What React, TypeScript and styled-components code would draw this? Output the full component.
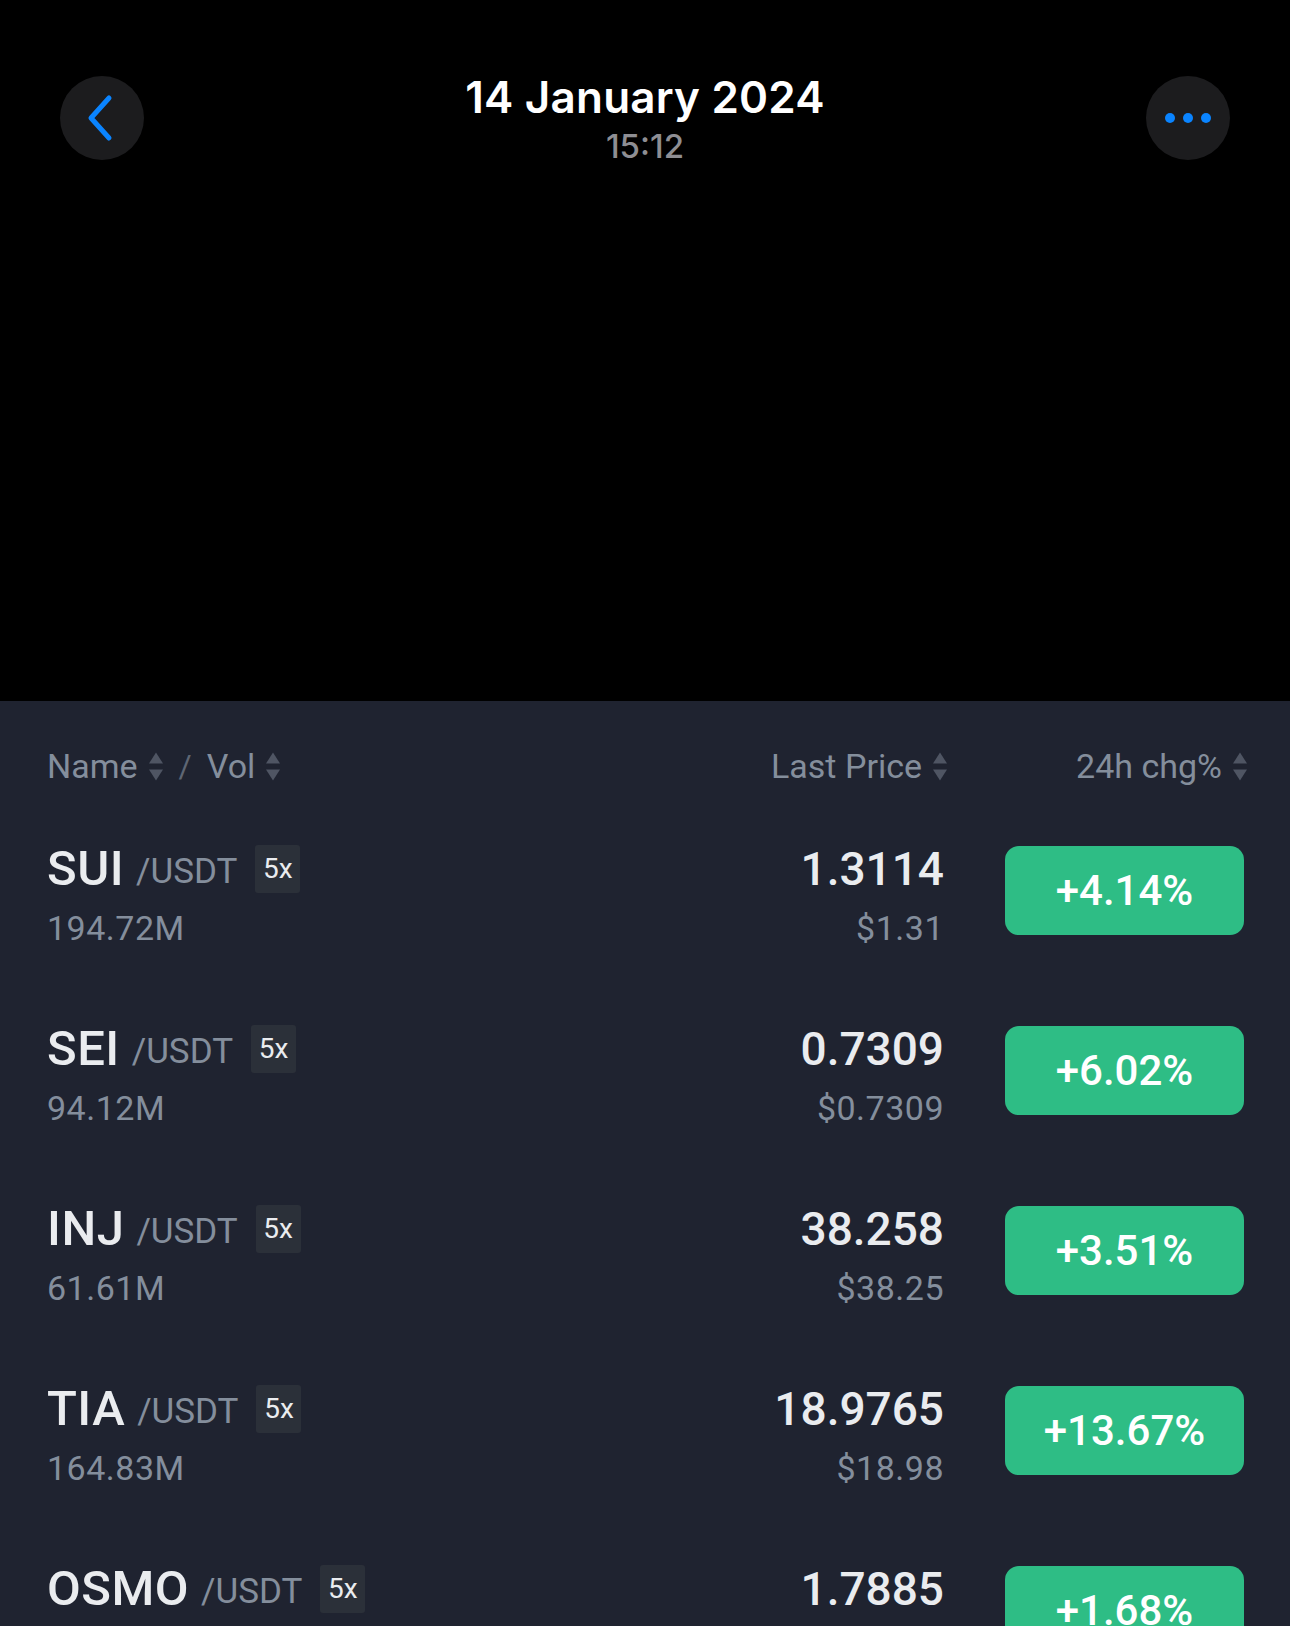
import React from 'react';
import styled, { createGlobalStyle } from 'styled-components';

const GlobalStyle = createGlobalStyle`
  html, body {
    margin: 0;
    padding: 0;
    background: #1f2330;
  }
  * {
    box-sizing: border-box;
  }
`;

interface Pair {
  base: string;
  vol: string;
  price: string;
  fiat: string;
  change: string;
}

const PAIRS: Pair[] = [
  { base: 'SUI', vol: '194.72M', price: '1.3114', fiat: '$1.31', change: '+4.14%' },
  { base: 'SEI', vol: '94.12M', price: '0.7309', fiat: '$0.7309', change: '+6.02%' },
  { base: 'INJ', vol: '61.61M', price: '38.258', fiat: '$38.25', change: '+3.51%' },
  { base: 'TIA', vol: '164.83M', price: '18.9765', fiat: '$18.98', change: '+13.67%' },
  { base: 'OSMO', vol: '', price: '1.7885', fiat: '', change: '+1.68%' },
];

const SortIcon: React.FC = () => (
  <SortSvg viewBox="0 0 16 31" width={16} height={31}>
    <path d="M8 1.5 L15 12.5 H1 Z" />
    <path d="M1 18.5 H15 L8 29.5 Z" />
  </SortSvg>
);

const App: React.FC = () => (
  <>
    <GlobalStyle />
    <Page>
      <Hero>
        <TopBar>
          <RoundButton aria-label="Back">
            <svg viewBox="0 0 28 48" width={28} height={48}>
              <path
                d="M23 4 L5 24 L23 44"
                fill="none"
                stroke="#0a84ff"
                strokeWidth={5}
                strokeLinecap="round"
                strokeLinejoin="round"
              />
            </svg>
          </RoundButton>
          <TitleBlock>
            <Title>14 January 2024</Title>
            <Time>15:12</Time>
          </TitleBlock>
          <RoundButton aria-label="More">
            <svg viewBox="0 0 48 12" width={48} height={12}>
              <circle cx="6" cy="6" r="5" fill="#0a84ff" />
              <circle cx="24" cy="6" r="5" fill="#0a84ff" />
              <circle cx="42" cy="6" r="5" fill="#0a84ff" />
            </svg>
          </RoundButton>
        </TopBar>
      </Hero>

      <Market>
        <HeaderRow>
          <HeaderLeft>
            <HeaderLabel>
              Name <SortIcon />
            </HeaderLabel>
            <Slash>/</Slash>
            <HeaderLabel>
              Vol <SortIcon />
            </HeaderLabel>
          </HeaderLeft>
          <HeaderLabel>
            Last Price <SortIcon />
          </HeaderLabel>
          <HeaderChange>
            <HeaderLabel>
              24h chg% <SortIcon />
            </HeaderLabel>
          </HeaderChange>
        </HeaderRow>

        {PAIRS.map((p) => (
          <Row key={p.base}>
            <NameCol>
              <NameLine>
                <Base>{p.base}</Base>
                <Quote>/USDT</Quote>
                <Leverage>5x</Leverage>
              </NameLine>
              <SubText>{p.vol}</SubText>
            </NameCol>
            <PriceCol>
              <Price>{p.price}</Price>
              <SubText>{p.fiat}</SubText>
            </PriceCol>
            <ChangeBadge>{p.change}</ChangeBadge>
          </Row>
        ))}
      </Market>
    </Page>
  </>
);

export default App;

const Page = styled.div`
  width: 1290px;
  min-height: 1626px;
  background: #1f2330;
  font-family: Roboto, 'Noto Sans', sans-serif;
  overflow: hidden;
`;

const Hero = styled.div`
  height: 701px;
  background: #000;
`;

const TopBar = styled.div`
  display: grid;
  grid-template-columns: 84px 1fr 84px;
  align-items: start;
  padding: 71px 60px 0;
`;

const RoundButton = styled.button`
  width: 84px;
  height: 84px;
  margin-top: 5px;
  border-radius: 50%;
  border: 0;
  padding: 0;
  background: #1c1c1e;
  display: flex;
  align-items: center;
  justify-content: center;
  &:first-child svg {
    margin-left: -4px;
  }
`;

const TitleBlock = styled.div`
  display: flex;
  flex-direction: column;
  align-items: center;
  font-family: Inter, 'Noto Sans', sans-serif;
`;

const Title = styled.div`
  font-size: 44px;
  line-height: 52px;
  font-weight: 600;
  color: #ffffff;
  letter-spacing: 0.2px;
`;

const Time = styled.div`
  font-size: 33px;
  line-height: 46px;
  font-weight: 500;
  color: #8e8e93;
`;

const Market = styled.div`
  display: flex;
  flex-direction: column;
`;

const HeaderRow = styled.div`
  display: flex;
  align-items: center;
  height: 104px;
  padding: 40px 42px 14px 47px;
`;

const HeaderLeft = styled.div`
  flex: 1;
  display: flex;
  align-items: center;
  gap: 15px;
`;

const HeaderLabel = styled.div`
  display: flex;
  align-items: center;
  gap: 10px;
  font-size: 34px;
  line-height: 50px;
  color: #848e9c;
`;

const Slash = styled.span`
  font-size: 32px;
  color: #5e6673;
`;

const HeaderChange = styled.div`
  width: 300px;
  display: flex;
  justify-content: flex-end;
`;

const SortSvg = styled.svg`
  fill: #4f5563;
  flex-shrink: 0;
`;

const Row = styled.div`
  display: flex;
  align-items: center;
  height: 180px;
  padding: 0 46px 0 47px;
`;

const NameCol = styled.div`
  flex: 1;
  display: flex;
  flex-direction: column;
  gap: 9px;
`;

const NameLine = styled.div`
  display: flex;
  align-items: center;
  height: 56px;
`;

const Base = styled.span`
  font-size: 49px;
  font-weight: 500;
  color: #eaecef;
  letter-spacing: 0.5px;
  margin-right: 12px;
`;

const Quote = styled.span`
  font-size: 35px;
  color: #848e9c;
  margin-top: 6px;
  margin-right: 18px;
`;

const Leverage = styled.span`
  display: flex;
  align-items: center;
  justify-content: center;
  width: 45px;
  height: 48px;
  background: #2b3039;
  border-radius: 3px;
  font-size: 28px;
  color: #eaecef;
`;

const SubText = styled.div`
  height: 44px;
  font-size: 34px;
  line-height: 44px;
  color: #848e9c;
  letter-spacing: 0.5px;
`;

const PriceCol = styled.div`
  display: flex;
  flex-direction: column;
  align-items: flex-end;
  gap: 9px;
  margin-right: 61px;
`;

const Price = styled.div`
  height: 56px;
  font-size: 46px;
  line-height: 56px;
  font-weight: 500;
  color: #eaecef;
`;

const ChangeBadge = styled.div`
  width: 239px;
  height: 89px;
  margin-bottom: 10px;
  border-radius: 14px;
  background: #2ebd85;
  display: flex;
  align-items: center;
  justify-content: center;
  font-size: 42px;
  font-weight: 500;
  color: #ffffff;
`;
